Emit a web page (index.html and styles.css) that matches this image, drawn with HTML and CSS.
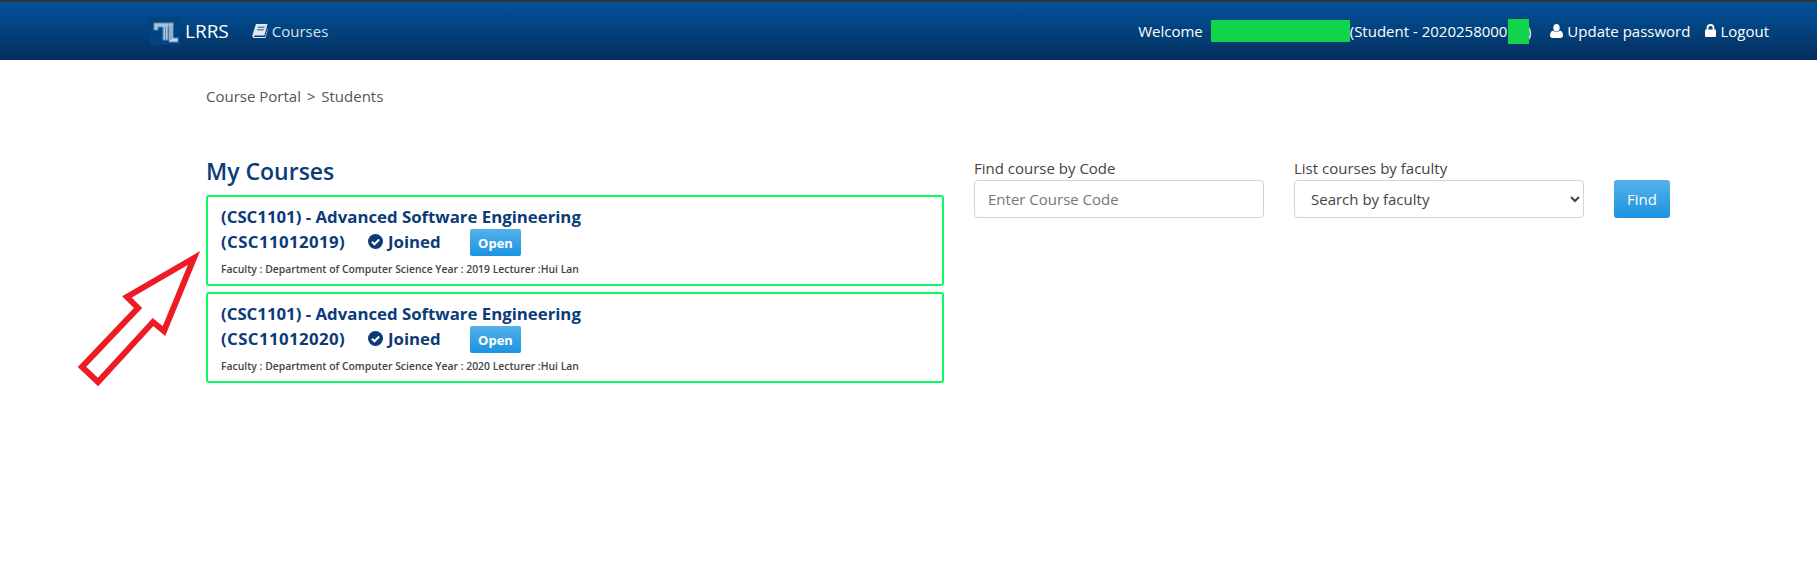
FILE: index.html
```html
<!DOCTYPE html>
<html lang="en">
<head>
    <meta charset="UTF-8">
    <meta name="viewport" content="width=device-width, initial-scale=1.0">
    <title>LRRS - My Courses</title>
    <link rel="stylesheet" href="styles.css">
</head>
<body>
    <header class="topbar">
        <div class="topbar-left">
            <a class="brand" href="#">
                <svg class="brand-logo" viewBox="0 0 30 28" aria-hidden="true">
                    <rect width="30" height="28" fill="#03437f"/>
                    <path d="M4 6h19v4h-5v13h-5V10H8v3H4z" fill="#a9c3dc" stroke="#5f8bb5" stroke-width="1"/>
                    <path d="M19 6h4v15h5v4H19z" fill="#c3d5e6" stroke="#5f8bb5" stroke-width="1"/>
                    <path d="M15.500 10v13M21 8v15" stroke="#5f8bb5" stroke-width="1"/>
                </svg>
                LRRS
            </a>
            <a class="nav-link" href="#">
                <svg class="nav-icon book" viewBox="0 0 16 14" aria-hidden="true">
                    <path d="M4 0h11.500l-3 11.500H3.200c-.9 0-1.200.5-1 1s.7.500 1.200.500h9.800l2.500-9v2l-2.300 8.500H3.200C1.200 14 0 12.700.4 11z" fill="#dfe8f1"/>
                    <path d="M6 3.200h6.500M5.300 5.800h6.500" stroke="#1a558f" stroke-width="1"/>
                </svg>
                Courses
            </a>
        </div>
        <div class="topbar-right">
            <span class="welcome">Welcome</span>
            <span class="redact-name"></span>
            <span class="student-id">(Student - 2020258000<span class="redact-id"></span>&nbsp;&nbsp;&nbsp;&nbsp;&nbsp;)</span>
            <a class="nav-link" href="#">
                <svg class="nav-icon" viewBox="0 0 13 14" aria-hidden="true">
                    <ellipse cx="6.500" cy="3.800" rx="3.200" ry="3.800" fill="#fff"/>
                    <path d="M3 6.500c1 1.800 6 1.800 7 0 2 .6 3 2.500 3 5 0 1.500-1 2.500-2.500 2.500h-8C1 14 0 13 0 11.500c0-2.500 1-4.400 3-5z" fill="#fff"/>
                </svg>
                Update password
            </a>
            <a class="nav-link" href="#">
                <svg class="nav-icon lock" viewBox="0 0 11 14" aria-hidden="true">
                    <path d="M2.500 6V4a3 3 0 0 1 6 0v2" fill="none" stroke="#fff" stroke-width="1.800"/>
                    <rect y="5.500" width="11" height="7.500" rx="1" fill="#fff"/>
                </svg>
                Logout
            </a>
        </div>
    </header>

    <main class="page">
        <div class="breadcrumb">Course Portal <span class="crumb-sep">&gt;</span> Students</div>

        <div class="columns">
            <section class="my-courses">
                <h2>My Courses</h2>

                <div class="course-card">
                    <div class="course-title">(CSC1101) - Advanced Software Engineering</div>
                    <div class="course-row">
                        <span class="course-code">(CSC11012019)</span>
                        <span class="joined">
                            <svg class="check" viewBox="0 0 16 16" aria-hidden="true">
                                <circle cx="8" cy="8" r="8" fill="#0b3b78"/>
                                <path d="M4.200 8.200l2.700 2.700 5-5" fill="none" stroke="#fff" stroke-width="2.200"/>
                            </svg>
                            Joined
                        </span>
                        <button class="btn-open">Open</button>
                    </div>
                    <div class="course-meta">Faculty : Department of Computer Science Year : 2019 Lecturer :Hui Lan</div>
                </div>

                <div class="course-card">
                    <div class="course-title">(CSC1101) - Advanced Software Engineering</div>
                    <div class="course-row">
                        <span class="course-code">(CSC11012020)</span>
                        <span class="joined">
                            <svg class="check" viewBox="0 0 16 16" aria-hidden="true">
                                <circle cx="8" cy="8" r="8" fill="#0b3b78"/>
                                <path d="M4.200 8.200l2.700 2.700 5-5" fill="none" stroke="#fff" stroke-width="2.200"/>
                            </svg>
                            Joined
                        </span>
                        <button class="btn-open">Open</button>
                    </div>
                    <div class="course-meta">Faculty : Department of Computer Science Year : 2020 Lecturer :Hui Lan</div>
                </div>
            </section>

            <section class="search">
                <div class="field">
                    <label for="courseCode">Find course by Code</label>
                    <input type="text" id="courseCode" placeholder="Enter Course Code">
                </div>
                <div class="field">
                    <label for="faculty">List courses by faculty</label>
                    <select id="faculty">
                        <option>Search by faculty</option>
                    </select>
                </div>
                <button class="btn-find">Find</button>
            </section>
        </div>
    </main>

    <!-- red annotation arrow drawn over the page -->
    <svg class="arrow" viewBox="0 0 140 150" aria-hidden="true">
        <polygon points="124,13 57,52 68,63 12,122 28,137 83,77 94,86" fill="none" stroke="#ed1c24" stroke-width="6" stroke-miterlimit="10"/>
    </svg>
</body>
</html>
```

FILE: styles.css
```css
/* Reset default styles */
* {
    margin: 0;
    padding: 0;
    box-sizing: border-box;
}
body {
    font-family: 'Open Sans', 'Noto Sans', sans-serif;
    background-color: #fff;
    color: #444;
    font-size: 15px;
}
a {
    color: inherit;
    text-decoration: none;
}

/* Top navigation */
.topbar {
    display: flex;
    justify-content: space-between;
    align-items: center;
    height: 60px;
    padding: 0 48px 0 150px;
    border-top: 2px solid #333;
    background: linear-gradient(#02539b, #032f5e);
    color: #fff;
}
.topbar-left,
.topbar-right {
    display: flex;
    align-items: center;
}
.brand {
    display: flex;
    align-items: center;
    gap: 5px;
    font-size: 19px;
    margin-right: 23px;
}
.brand-logo {
    width: 30px;
    height: 28px;
}
.nav-link {
    display: flex;
    align-items: center;
    gap: 4px;
    font-size: 15px;
}
.topbar-left .nav-link {
    color: #d5e1ec;
}
.nav-icon {
    width: 13px;
    height: 14px;
}
.book {
    width: 16px;
}
.lock {
    width: 11px;
}
.welcome {
    margin-right: 8px;
}
.redact-name {
    width: 139px;
    height: 22px;
    background-color: #12d44a;
}
.student-id {
    position: relative;
    margin-right: 19px;
}
.redact-id {
    position: absolute;
    top: -2px;
    right: 2px;
    width: 21px;
    height: 25px;
    background-color: #12d44a;
}
.topbar-right .nav-link + .nav-link {
    margin-left: 15px;
}

/* Page content */
.page {
    padding: 26px 147px 0 206px;
}
.breadcrumb {
    font-size: 15px;
    line-height: 20px;
    color: #555;
}
.crumb-sep {
    margin: 0 2px;
}
.columns {
    display: flex;
    margin-top: 50px;
}
.my-courses {
    width: 738px;
}
.my-courses h2 {
    font-size: 23px;
    font-weight: 600;
    line-height: 30px;
    color: #0b3b78;
    margin-bottom: 9px;
}
.course-card {
    height: 91px;
    padding: 8px 13px 0;
    margin-bottom: 6px;
    border: 2px solid #0afa64;
    border-radius: 3px;
    color: #0b3b78;
}
.course-title,
.course-row {
    font-size: 16.800px;
    font-weight: 700;
}
.course-title {
    line-height: 24px;
}
.course-row {
    display: flex;
    align-items: center;
    height: 27px;
}
.course-code {
    width: 147px;
    padding-bottom: 2px;
    letter-spacing: .4px;
}
.joined {
    display: flex;
    align-items: center;
    gap: 5px;
    width: 102px;
    padding-bottom: 2px;
}
.check {
    width: 15px;
    height: 15px;
}
.btn-open {
    width: 51px;
    height: 27px;
    font-family: inherit;
    font-size: 13px;
    font-weight: 700;
    color: #fff;
    border: none;
    border-radius: 2px;
    background: linear-gradient(#54b1e9, #1b93e2);
}
.course-meta {
    margin-top: 6px;
    font-size: 10.400px;
    font-weight: 600;
    color: #444;
}

/* Search form */
.search {
    display: flex;
    align-items: flex-end;
    gap: 30px;
    margin-left: 30px;
    padding-top: 2px;
    align-self: flex-start;
}
.field {
    width: 290px;
}
.field label {
    display: block;
    line-height: 20px;
    margin-bottom: 2px;
}
.field input,
.field select {
    display: block;
    width: 100%;
    height: 38px;
    font-family: inherit;
    font-size: 15px;
    color: #444;
    background-color: #fff;
    border: 1px solid #ced4da;
    border-radius: 4px;
}
.field input {
    padding: 0 13px;
}
.field input::placeholder {
    color: #777;
}
.field select {
    padding: 0 12px;
}
.btn-find {
    width: 56px;
    height: 38px;
    font-family: inherit;
    font-size: 15px;
    color: #fff;
    border: none;
    border-radius: 3px;
    background: linear-gradient(#54b1e9, #1b93e2);
}

/* Annotation */
.arrow {
    position: absolute;
    left: 70px;
    top: 245px;
    width: 140px;
    height: 150px;
}
```
